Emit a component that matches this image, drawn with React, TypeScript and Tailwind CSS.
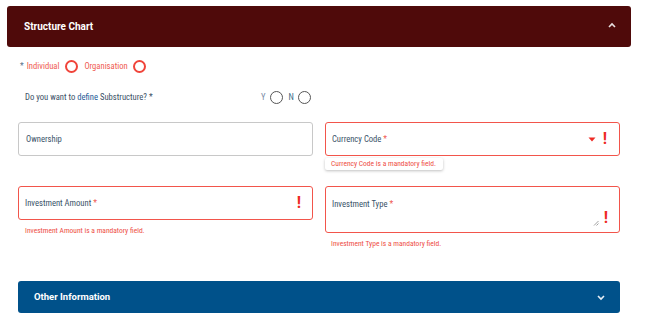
import React from "react";

function Bang({ className = "" }: { className?: string }) {
  return (
    <span className={"font-bold text-[16px] leading-none text-[#ee2a24] font-['Roboto',sans-serif] " + className}>!</span>
  );
}

const lbl = "font-['Liberation_Sans_Narrow','Roboto_Condensed','Roboto',sans-serif] text-[8.6px]";
const err = "font-['Liberation_Sans_Narrow','Roboto_Condensed','Roboto',sans-serif] text-[7.5px] text-[#ee4d45]";

export default function App() {
  return (
    <div className="w-[668px] h-[327px] bg-white overflow-hidden font-['Roboto',sans-serif]">
      {/* Header */}
      <div className="ml-[7px] mt-[6px] w-[624px] h-[41px] bg-[#4f0a0a] rounded-[3px] flex items-center justify-between pl-[17px] pr-[14px]">
        <span className="text-white font-bold text-[10px]">Structure Chart</span>
        <svg width="10" height="7" viewBox="0 0 10 7" className="mb-[2px]">
          <path d="M2 5 L5 2 L8 5" stroke="#e8e0e0" strokeWidth="1.6" fill="none" />
        </svg>
      </div>

      <div className="ml-[18px] w-[602px]">
        {/* Row 1 */}
        <div className={"flex items-center h-[16px] mt-[11px] pl-[2px] " + lbl}>
          <span className="text-[#56708a] mr-[3px]">*</span>
          <span className="text-[#ef5a50]">Individual</span>
          <span className="ml-[6px] w-[13px] h-[13px] rounded-full border-2 border-[#f0443a]" />
          <span className="ml-[6px] text-[#ef5a50]">Organisation</span>
          <span className="ml-[5px] w-[13px] h-[13px] rounded-full border-2 border-[#f0443a]" />
        </div>

        {/* Row 2 */}
        <div className={"flex items-center h-[16px] mt-[15px] pl-[7px] " + lbl}>
          <span className="text-[#3a4f66] w-[236px]">
            Do you want to <span className="text-[#1e5a96]">define</span> Substructure? *
          </span>
          <span className="text-[#7a8ca6]">Y</span>
          <span className="ml-[4px] w-[13px] h-[13px] rounded-full border-[1.5px] border-[#555]" />
          <span className="ml-[6px] text-[#3a6c8a]">N</span>
          <span className="ml-[4px] w-[13px] h-[13px] rounded-full border-[1.5px] border-[#555]" />
        </div>

        {/* Fields */}
        <div className="grid grid-cols-[295px_295px] gap-x-[12px] mt-[17px]">
          {/* Ownership */}
          <div className={"h-[34px] border border-[#c8c8c8] rounded-[3px] flex items-center pl-[7px] text-[#3a5268] " + lbl}>
            Ownership
          </div>
          {/* Currency Code */}
          <div className="relative">
            <div className={"h-[34px] border-[1.5px] border-[#f2554b] rounded-[3px] flex items-center pl-[6px] pr-[12px] text-[#3a5268] " + lbl}>
              <span className="flex-1">
                Currency Code <span className="text-[#ef5a50]">*</span>
              </span>
              <svg width="8" height="5" viewBox="0 0 8 5" className="mr-[7px]">
                <path d="M0.5 0.5 L7.5 0.5 L4 4.5 Z" fill="#ee2a24" />
              </svg>
              <Bang />
            </div>
            <div className={"absolute left-0 top-[36px] w-[118px] h-[12px] bg-white shadow-[0_1px_3px_rgba(0,0,0,0.25)] rounded-[2px] flex items-center pl-[6px] whitespace-nowrap " + err}>
              Currency Code is a mandatory field.
            </div>
          </div>

          {/* Investment Amount */}
          <div className="mt-[30px]">
            <div className={"h-[34px] border-[1.5px] border-[#f2554b] rounded-[3px] flex items-center pl-[6px] pr-[11px] text-[#3a5268] " + lbl}>
              <span className="flex-1">
                Investment Amount <span className="text-[#ef5a50]">*</span>
              </span>
              <Bang />
            </div>
            <div className={"mt-[5px] pl-[7px] " + err}>Investment Amount is a mandatory field.</div>
          </div>

          {/* Investment Type */}
          <div className="mt-[30px]">
            <div className={"relative h-[47px] border-[1.5px] border-[#f2554b] rounded-[3px] pl-[6px] pt-[11px] text-[#3a5268] " + lbl}>
              Investment Type <span className="text-[#ef5a50]">*</span>
              <svg width="6" height="6" viewBox="0 0 6 6" className="absolute right-[20px] bottom-[6px]">
                <path d="M1 5.5 L5.5 1 M3.5 5.5 L5.5 3.5" stroke="#888" strokeWidth="0.8" />
              </svg>
              <Bang className="absolute right-[11px] bottom-[6px]" />
            </div>
            <div className={"mt-[5px] pl-[6px] " + err}>Investment Type is a mandatory field.</div>
          </div>
        </div>

        {/* Other Information */}
        <div className="mt-[32px] h-[32px] bg-[#00518a] rounded-[3px] flex items-center justify-between pl-[16px] pr-[14px]">
          <span className="text-white font-bold text-[9.5px]">Other Information</span>
          <svg width="10" height="7" viewBox="0 0 10 7">
            <path d="M2 2 L5 5 L8 2" stroke="#e8eef5" strokeWidth="1.6" fill="none" />
          </svg>
        </div>
      </div>
    </div>
  );
}
